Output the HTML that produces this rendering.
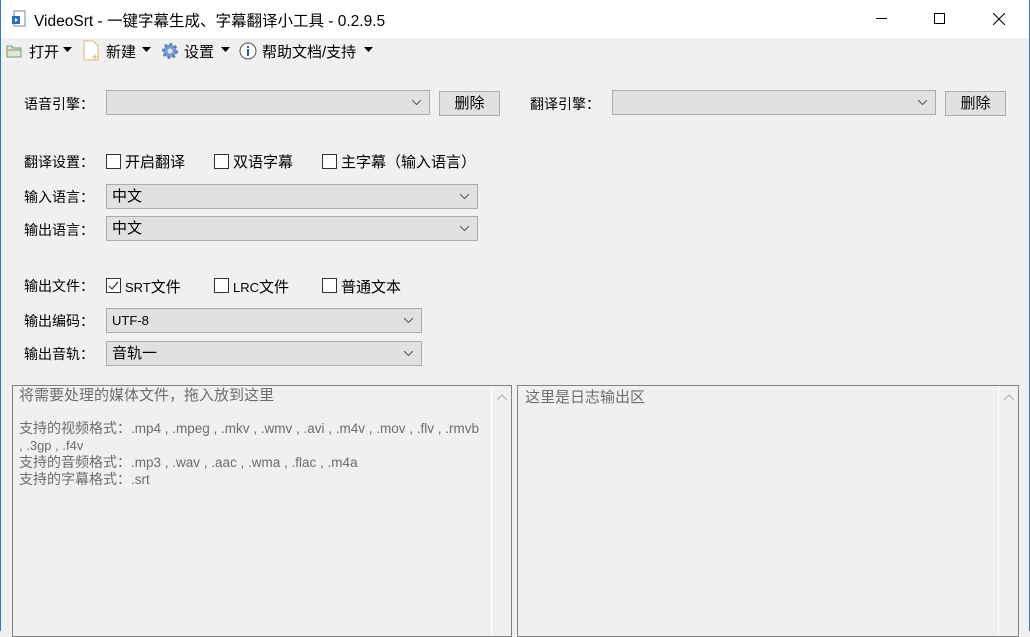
<!DOCTYPE html>
<html><head><meta charset="utf-8"><style>
*{margin:0;padding:0;box-sizing:border-box}
body{width:1030px;height:631px;overflow:hidden;background:#f0f0f0;position:relative;font-family:"Liberation Sans","Microsoft YaHei","Noto Sans CJK SC",sans-serif;font-size:14px;color:#000}
.a{position:absolute;white-space:nowrap}
.title{left:0;top:0;width:1030px;height:38px;background:#fff}
.cb{position:absolute;height:25px;background:#e1e1e1;border:1px solid #adadad;padding-left:5px;line-height:23px}
.cb svg{position:absolute;right:8px;top:9px}
.btn{position:absolute;background:#e1e1e1;border:1px solid #adadad;text-align:center;line-height:23px}
.chk{position:absolute;width:15px;height:15px;border:1px solid #333;background:#fff}
.panel{position:absolute;border:1px solid #828282;background:#f0f0f0;color:#6d6d6d}
.sb{position:absolute;right:0;top:0;bottom:0;width:20px;border-left:1px solid #fff}
.l{font-size:15px}
</style></head><body>
<div class="a title"></div>
<div class="a" style="left:0;top:0;width:1px;height:631px;background:#2b79c9"></div>
<div class="a" style="right:0;top:0;width:1px;height:631px;background:#2b79c9"></div>
<svg class="a" style="left:11px;top:10px" width="16" height="18"><rect x="3" y="1" width="11" height="15" fill="#fff" stroke="#7a8aa0"/><rect x="1" y="6" width="8" height="8" fill="#2a6fb8"/><path d="M4 8l3 2-3 2z" fill="#fff"/></svg>
<div class="a" style="left:34px;top:9px;font-size:15.5px">VideoSrt - 一键字幕生成、字幕翻译小工具 - 0.2.9.5</div>
<div class="a" style="left:876px;top:18px;width:11px;height:1px;background:#000"></div>
<div class="a" style="left:934px;top:13px;width:11px;height:11px;border:1px solid #000"></div>
<svg class="a" style="left:993px;top:13px" width="12" height="12"><path d="M0 0L12 12M12 0L0 12" stroke="#000"/></svg>
<!-- toolbar -->
<svg class="a" style="left:6px;top:44px" width="17" height="14"><path d="M1 2h5l1 2h8v9H1z" fill="#dfe8d8" stroke="#7a9a6e"/><path d="M1 6h14" stroke="#7a9a6e"/></svg>
<div class="a l" style="left:29px;top:41px">打开</div>
<svg class="a" style="left:63px;top:47px" width="9" height="5"><path d="M0 0h9L4.5 5z"/></svg>
<svg class="a" style="left:82px;top:40px" width="20" height="22"><path d="M2 1h9l5 5v14H2z" fill="#fff" stroke="#d9b87a"/><path d="M13 14v6M10 17h6" stroke="#d9b87a"/></svg>
<div class="a l" style="left:106px;top:41px">新建</div>
<svg class="a" style="left:142px;top:47px" width="9" height="5"><path d="M0 0h9L4.5 5z"/></svg>
<svg class="a" style="left:161px;top:42px" width="18" height="18"><circle cx="9" cy="9" r="6.5" fill="#7b9ccf" stroke="#5b7fb8" stroke-width="3" stroke-dasharray="2.5 2.5"/><circle cx="9" cy="9" r="2.5" fill="#dde7f5"/></svg>
<div class="a l" style="left:184px;top:41px">设置</div>
<svg class="a" style="left:221px;top:47px" width="9" height="5"><path d="M0 0h9L4.5 5z"/></svg>
<svg class="a" style="left:239px;top:42px" width="18" height="18"><circle cx="9" cy="9" r="8" fill="#fff" stroke="#555"/><rect x="8" y="7" width="2" height="7" fill="#2a5fa8"/><rect x="8" y="4" width="2" height="2" fill="#2a5fa8"/></svg>
<div class="a l" style="left:262px;top:41px">帮助文档/支持</div>
<svg class="a" style="left:364px;top:47px" width="9" height="5"><path d="M0 0h9L4.5 5z"/></svg>
<!-- engines -->
<div class="a" style="left:24px;top:94px">语音引擎：</div>
<div class="cb" style="left:106px;top:90px;width:324px"><svg width="9" height="5"><path d="M0 0l4.5 4.5L9 0" fill="none" stroke="#555"/></svg></div>
<div class="btn l" style="left:439px;top:91px;width:61px;height:25px">删除</div>
<div class="a" style="left:530px;top:94px">翻译引擎：</div>
<div class="cb" style="left:612px;top:90px;width:324px"><svg width="9" height="5"><path d="M0 0l4.5 4.5L9 0" fill="none" stroke="#555"/></svg></div>
<div class="btn l" style="left:945px;top:91px;width:61px;height:25px">删除</div>
<!-- translate -->
<div class="a" style="left:24px;top:152px">翻译设置：</div>
<div class="chk" style="left:106px;top:154px"></div><div class="a l" style="left:125px;top:151px">开启翻译</div>
<div class="chk" style="left:214px;top:154px"></div><div class="a l" style="left:233px;top:151px">双语字幕</div>
<div class="chk" style="left:322px;top:154px"></div><div class="a l" style="left:341px;top:151px">主字幕（输入语言）</div>
<div class="a" style="left:24px;top:187px">输入语言：</div>
<div class="cb l" style="left:106px;top:184px;width:372px">中文<svg width="9" height="5"><path d="M0 0l4.5 4.5L9 0" fill="none" stroke="#555"/></svg></div>
<div class="a" style="left:24px;top:220px">输出语言：</div>
<div class="cb l" style="left:106px;top:216px;width:372px">中文<svg width="9" height="5"><path d="M0 0l4.5 4.5L9 0" fill="none" stroke="#555"/></svg></div>
<!-- output -->
<div class="a" style="left:24px;top:276px">输出文件：</div>
<div class="chk" style="left:106px;top:278px"><svg width="13" height="13" style="position:absolute;left:0;top:0"><path d="M2 7l3 3 6-7" fill="none" stroke="#333" stroke-width="1.2"/></svg></div><div class="a l" style="left:125px;top:276px"><span style="font-size:13px">SRT</span>文件</div>
<div class="chk" style="left:214px;top:278px"></div><div class="a l" style="left:233px;top:276px"><span style="font-size:13px">LRC</span>文件</div>
<div class="chk" style="left:322px;top:278px"></div><div class="a l" style="left:341px;top:276px">普通文本</div>
<div class="a" style="left:24px;top:311px">输出编码：</div>
<div class="cb" style="left:106px;top:308px;width:316px;font-size:13px">UTF-8<svg width="9" height="5"><path d="M0 0l4.5 4.5L9 0" fill="none" stroke="#555"/></svg></div>
<div class="a" style="left:24px;top:344px">输出音轨：</div>
<div class="cb l" style="left:106px;top:341px;width:316px">音轨一<svg width="9" height="5"><path d="M0 0l4.5 4.5L9 0" fill="none" stroke="#555"/></svg></div>
<!-- panels -->
<div class="panel" style="left:12px;top:385px;width:500px;height:252px">
<div class="a" style="left:6px;top:1px;line-height:16px"><span class="l">将需要处理的媒体文件，拖入放到这里</span><br><br>支持的视频格式：<span style="font-size:13.5px">.mp4 , .mpeg , .mkv , .wmv , .avi , .m4v , .mov , .flv , .rmvb</span><br><span style="font-size:13px">, .3gp , .f4v</span><br>支持的音频格式：<span style="font-size:13.5px">.mp3 , .wav , .aac , .wma , .flac , .m4a</span><br>支持的字幕格式：<span style="font-size:13.5px">.srt</span></div>
<div class="sb"><svg width="10" height="6" style="position:absolute;left:5px;top:8px"><path d="M0 6l5-5 5 5" fill="none" stroke="#bbb" stroke-width="1.3"/></svg></div>
</div>
<div class="panel" style="left:517px;top:385px;width:502px;height:252px">
<div class="a l" style="left:7px;top:0px">这里是日志输出区</div>
<div class="sb"><svg width="10" height="6" style="position:absolute;left:5px;top:8px"><path d="M0 6l5-5 5 5" fill="none" stroke="#bbb" stroke-width="1.3"/></svg></div>
</div>
</body></html>
